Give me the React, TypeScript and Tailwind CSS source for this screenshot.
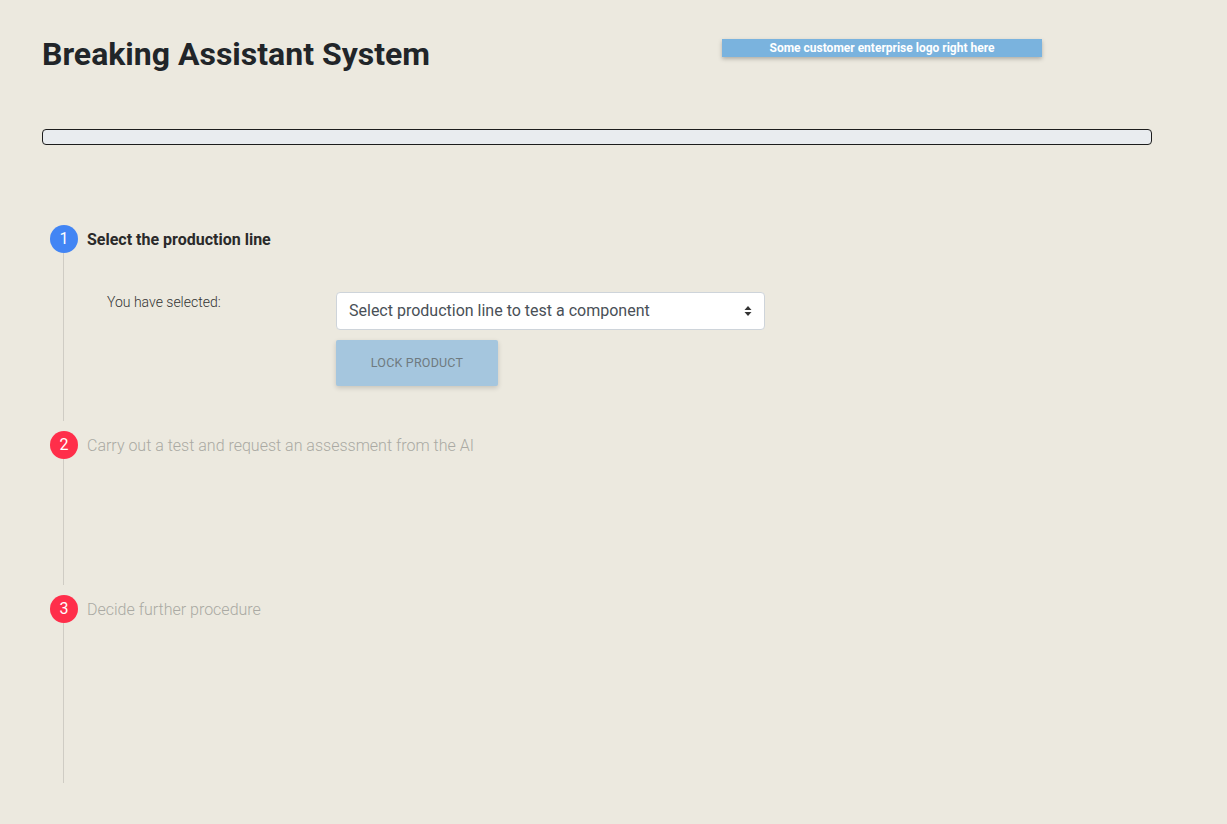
import React from "react";

function StepCircle({ n, color }: { n: number; color: string }) {
  return (
    <div
      className={`w-[28px] h-[28px] rounded-full flex items-center justify-center text-white text-[16px] font-normal shrink-0 ${color}`}
    >
      {n}
    </div>
  );
}

export default function App() {
  return (
    <div className="min-h-[824px] w-full bg-[#ece9df] font-['Roboto',sans-serif] text-[#212529]">
      <div className="pl-[42px] pt-[34px] pr-[75px]">
        <div className="flex items-start">
          <h1 className="text-[32px] leading-[40px] font-bold text-[#212529] w-[680px]">
            Breaking Assistant System
          </h1>
          <div className="mt-[5px] w-[320px] h-[18px] bg-[#7ab3de] shadow-[0_2px_4px_rgba(0,0,0,0.25)] text-white text-[12px] font-bold flex items-center justify-center">
            Some customer enterprise logo right here
          </div>
        </div>
        <div className="mt-[55px] w-[1110px] h-[16px] bg-[#e9ecef] border border-[#1d1d1d] rounded-[4px]" />
      </div>

      <div className="pl-[50px] pt-[80px]">
        {/* Step 1 */}
        <div className="flex flex-col">
          <div className="flex items-center gap-[9px] h-[28px]">
            <StepCircle n={1} color="bg-[#4285f4]" />
            <span className="text-[16px] font-bold text-[#2a2a2a] mt-[1px]">Select the production line</span>
          </div>
          <div className="ml-[13px] border-l border-[#cfccc4] h-[168px] mb-[10px] flex pt-[39px] pl-[43px]">
            <div className="w-[229px] text-[14px] font-light text-[#333] leading-[20px] pt-[0px]">
              You have selected:
            </div>
            <div className="flex flex-col gap-[10px]">
              <div className="w-[429px] h-[38px] bg-white border border-[#ced4da] rounded-[4px] flex items-center justify-between pl-[12px] pr-[12px] text-[16px] text-[#495057]">
                <span>Select production line to test a component</span>
                <svg width="8" height="12" viewBox="0 0 8 12">
                  <path d="M4 1 L7.5 5 L0.5 5 Z" fill="#333" />
                  <path d="M4 11 L7.5 7 L0.5 7 Z" fill="#333" />
                </svg>
              </div>
              <div className="w-[162px] h-[46px] bg-[#a5c6de] rounded-[2px] shadow-[0_2px_5px_rgba(0,0,0,0.16)] flex items-center justify-center text-[12.5px] text-[#6f7a80] tracking-[0.2px]">
                LOCK PRODUCT
              </div>
            </div>
          </div>
        </div>

        {/* Step 2 */}
        <div className="flex flex-col">
          <div className="flex items-center gap-[9px] h-[28px]">
            <StepCircle n={2} color="bg-[#ff2e4a]" />
            <span className="text-[16px] font-light text-[#aaa9a3] mt-[1px]">
              Carry out a test and request an assessment from the AI
            </span>
          </div>
          <div className="ml-[13px] border-l border-[#cfccc4] h-[126px] mb-[10px]" />
        </div>

        {/* Step 3 */}
        <div className="flex flex-col">
          <div className="flex items-center gap-[9px] h-[28px]">
            <StepCircle n={3} color="bg-[#ff2e4a]" />
            <span className="text-[16px] font-light text-[#aaa9a3] mt-[1px]">Decide further procedure</span>
          </div>
          <div className="ml-[13px] border-l border-[#cfccc4] h-[160px]" />
        </div>
      </div>
    </div>
  );
}
